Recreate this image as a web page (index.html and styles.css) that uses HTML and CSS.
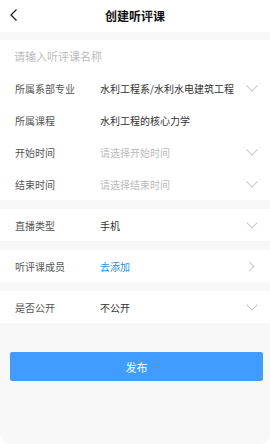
FILE: index.html
```html
<!DOCTYPE html>
<html lang="zh">
<head>
<meta charset="utf-8">
<link rel="stylesheet" href="styles.css">
</head>
<body>
<div class="page">
  <header class="header">
    <span class="back">
      <svg width="10" height="14" viewBox="0 0 10 14"><path d="M7.5 1.5 L2 7 L7.5 12.5" fill="none" stroke="#222" stroke-width="1.3"/></svg>
    </span>
    <h1 class="title">创建听评课</h1>
  </header>

  <section class="group">
    <div class="row name-row"><span class="placeholder name">请输入听评课名称</span></div>
    <div class="row">
      <span class="label">所属系部专业</span>
      <span class="value">水利工程系/水利水电建筑工程</span>
      <span class="icon down"></span>
    </div>
    <div class="row">
      <span class="label">所属课程</span>
      <span class="value">水利工程的核心力学</span>
    </div>
    <div class="row">
      <span class="label">开始时间</span>
      <span class="value placeholder">请选择开始时间</span>
      <span class="icon down"></span>
    </div>
    <div class="row">
      <span class="label">结束时间</span>
      <span class="value placeholder">请选择结束时间</span>
      <span class="icon down"></span>
    </div>
  </section>

  <section class="group">
    <div class="row">
      <span class="label">直播类型</span>
      <span class="value">手机</span>
      <span class="icon down"></span>
    </div>
  </section>

  <section class="group">
    <div class="row">
      <span class="label">听评课成员</span>
      <span class="value link">去添加</span>
      <span class="icon right"></span>
    </div>
  </section>

  <section class="group">
    <div class="row">
      <span class="label">是否公开</span>
      <span class="value">不公开</span>
      <span class="icon down"></span>
    </div>
  </section>

  <div class="actions">
    <button class="publish">发布</button>
  </div>
</div>
</body>
</html>
```
FILE: styles.css
```css
* { box-sizing: border-box; margin: 0; padding: 0; }
html, body { background: #ffffff; }
body {
  width: 270px;
  height: 444px;
  font-family: "Noto Sans CJK SC", "Noto Sans", sans-serif;
  overflow: hidden;
}
.page {
  height: 444px;
  background: #f8f8f8;
  border-radius: 0 0 10px 10px;
  display: flex;
  flex-direction: column;
}
.header {
  height: 32px;
  background: #fff;
  display: flex;
  align-items: center;
  justify-content: center;
  position: relative;
}
.back {
  position: absolute;
  left: 9px;
  top: 8px;
  display: flex;
}
.title {
  font-size: 12px;
  font-weight: 700;
  color: #111;
  line-height: 1;
}
.group {
  background: #fff;
  margin-top: 8px;
}
.group + .group { margin-top: 9px; }
.row {
  height: 32px;
  display: flex;
  align-items: center;
  padding: 0 14px 0 15px;
  font-size: 10px;
  color: #333;
  position: relative;
}
.name-row { padding-left: 14px; }
.name { font-size: 11px; }
.label {
  width: 85px;
  color: #555;
  flex: none;
}
.value { flex: 1; color: #333; }
.placeholder { color: #bbb; }
.link { color: #2b8fe6; }
.icon {
  width: 10px;
  height: 10px;
  flex: none;
  position: relative;
}
.icon::before {
  content: "";
  position: absolute;
  width: 6px;
  height: 6px;
  border-right: 1px solid #c8c8c8;
  border-bottom: 1px solid #c8c8c8;
}
.down { margin-top: -2px; }
.down::before { left: 2px; top: 0; transform: rotate(45deg); width: 7px; height: 7px; }
.right::before { left: 0; top: 2px; transform: rotate(-45deg); }
.actions {
  padding: 29px 7px 0 10px;
}
.publish {
  width: 100%;
  height: 29px;
  border: none;
  border-radius: 2px;
  background: #409dff;
  color: #fff;
  font-family: "Noto Sans CJK SC", sans-serif;
  font-size: 11px;
}
```
